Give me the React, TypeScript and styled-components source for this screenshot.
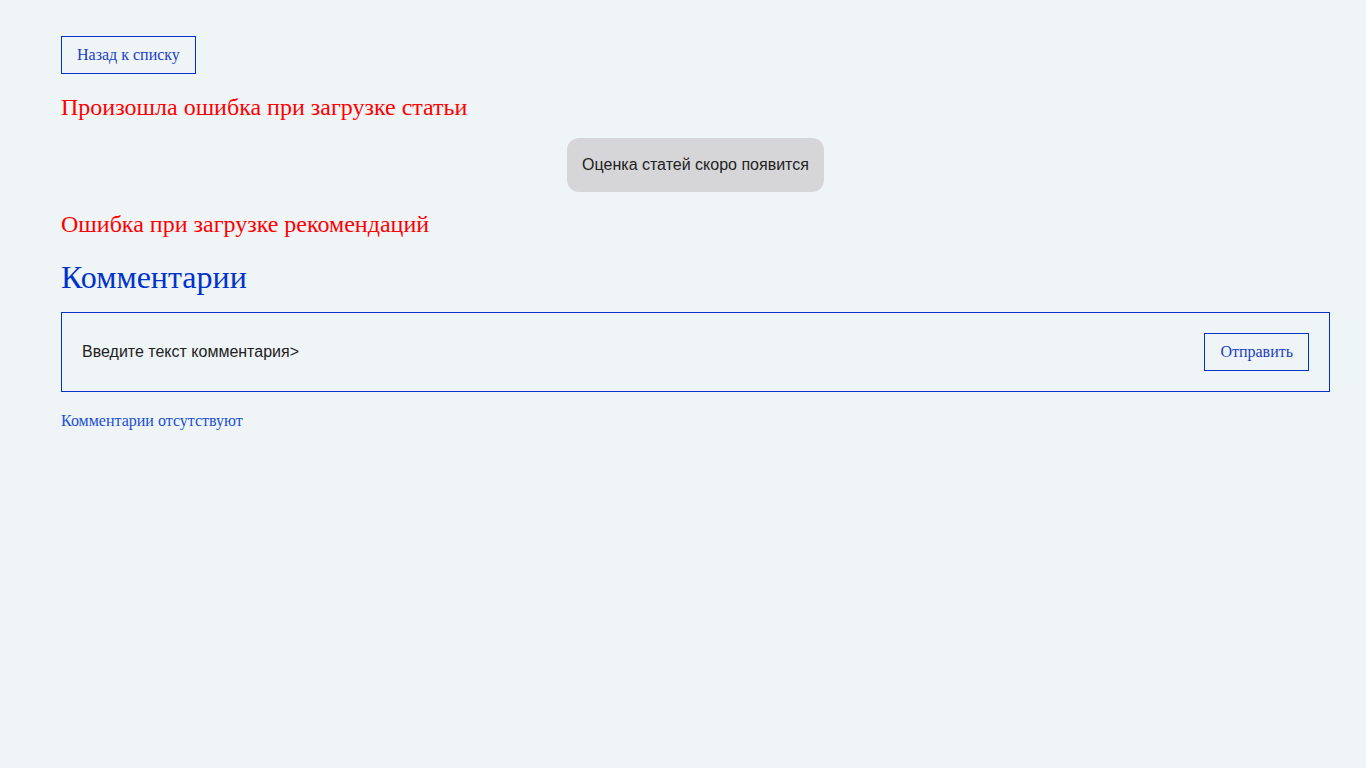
import React from "react";
import styled, { createGlobalStyle } from "styled-components";

const Global = createGlobalStyle`
  html, body { margin: 0; padding: 0; background: #eff4f7; }
  body { font-family: "Liberation Serif", "Times New Roman", serif; }
`;

const Page = styled.div`
  min-height: 768px;
  box-sizing: border-box;
  padding: 36px 36px 0 61px;
  display: flex;
  flex-direction: column;
  align-items: stretch;
`;

const OutlineButton = styled.button`
  align-self: flex-start;
  font-family: "Liberation Serif", "Times New Roman", serif;
  font-size: 16px;
  color: #1a3fc4;
  background: transparent;
  border: 1px solid #0033cc;
  height: 38px;
  padding: 0 15px;
  cursor: pointer;
`;

const SubmitButton = styled(OutlineButton)`
  align-self: center;
`;

const ErrorText = styled.div<{ $top: number }>`
  color: #ff0000;
  font-size: 24px;
  line-height: 28px;
  margin-top: ${(p) => p.$top}px;
`;

const RatingRow = styled.div`
  display: flex;
  justify-content: center;
  margin-top: 17px;
`;

const RatingPill = styled.div`
  background: #d6d6d8;
  border-radius: 12px;
  height: 54px;
  padding: 0 15px;
  display: flex;
  align-items: center;
  font-family: "Liberation Sans", Arial, sans-serif;
  font-size: 16px;
  color: #222;
`;

const Heading = styled.h2`
  margin: 21px 0 0;
  font-weight: normal;
  font-size: 32px;
  line-height: 36px;
  color: #0033cc;
`;

const CommentForm = styled.form`
  margin-top: 17px;
  border: 1px solid #0033cc;
  height: 80px;
  box-sizing: border-box;
  padding: 0 20px;
  display: flex;
  align-items: center;
  gap: 20px;
`;

const CommentInput = styled.input`
  flex: 1;
  border: none;
  background: transparent;
  outline: none;
  font-family: "Liberation Sans", Arial, sans-serif;
  font-size: 16px;
  color: #222;
  padding: 0;
  &::placeholder { color: #222; }
`;

const EmptyText = styled.div`
  margin-top: 20px;
  font-size: 16px;
  color: #1a4fd6;
`;

export default function App() {
  return (
    <>
      <Global />
      <Page>
        <OutlineButton>Назад к списку</OutlineButton>
        <ErrorText $top={19}>Произошла ошибка при загрузке статьи</ErrorText>
        <RatingRow>
          <RatingPill>Оценка статей скоро появится</RatingPill>
        </RatingRow>
        <ErrorText $top={18}>Ошибка при загрузке рекомендаций</ErrorText>
        <Heading>Комментарии</Heading>
        <CommentForm onSubmit={(e) => e.preventDefault()}>
          <CommentInput placeholder="Введите текст комментария>" />
          <SubmitButton type="submit">Отправить</SubmitButton>
        </CommentForm>
        <EmptyText>Комментарии отсутствуют</EmptyText>
      </Page>
    </>
  );
}
